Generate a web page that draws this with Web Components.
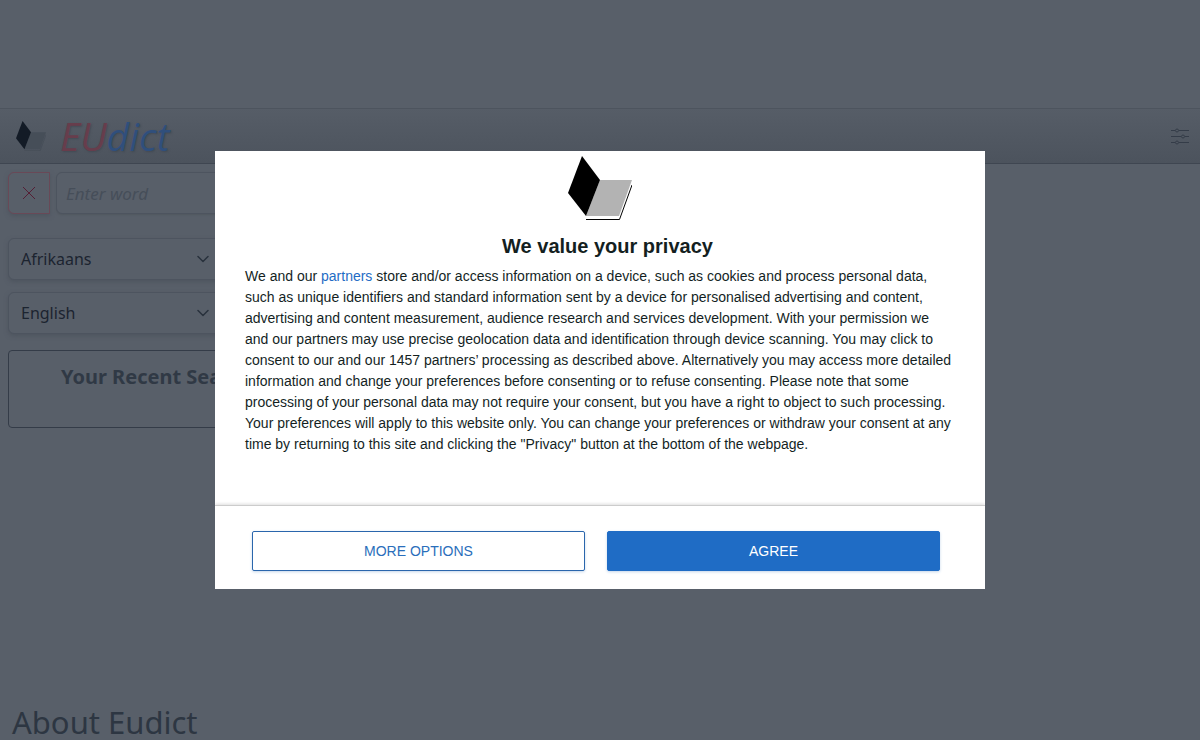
<!DOCTYPE html>
<html lang="en">
<head>
<meta charset="utf-8">
<meta name="viewport" content="width=device-width, initial-scale=1">
<title>EUdict</title>
<style>
  body { margin: 0; background: #585f69; color: #2d3642; font-family: "Noto Sans", "Open Sans", sans-serif; overflow: hidden; }
</style>
</head>
<body>
<eu-page></eu-page>
<privacy-dialog></privacy-dialog>

<template id="logo-tpl">
  <style>
    :host { display: block; }
    svg { display: block; width: 100%; height: 100%; }
    .cover { fill: var(--cover, #000); }
    .leaf { fill: var(--leaf, #b3b3b3); }
    .edge { fill: none; stroke: var(--edge, #000); stroke-width: 1; }
  </style>
  <svg viewBox="0 0 64 64" aria-hidden="true">
    <path class="leaf" d="M32 24H64L51 60H18Z"/>
    <path class="cover" d="M14 0L32 24L18 60L0 37Z"/>
    <path class="edge" d="M64 29L51.500 63.500H18"/>
  </svg>
</template>

<template id="header-tpl">
  <style>
    :host { display: flex; align-items: center; box-sizing: border-box; height: 56px; padding: 0 11px 0 16px;
      border-top: 1px solid #4d545e; border-bottom: 1px solid #3f4651;
      background: linear-gradient(#565d67, #4c535d); }
    a { display: flex; align-items: center; gap: 14px; text-decoration: none; }
    eu-logo { width: 30px; height: 30px; --cover: #131b26; --leaf: #464e58; --edge: #3f4751; }
    .name { font: italic 39px/54px "Open Sans", sans-serif; text-shadow: 1px 1px 2px #434a54; }
    .eu { color: #673d4c; }
    .dict { color: #304f7c; }
    button { margin-left: auto; padding: 0; border: 0; background: none; color: #343c48; }
    svg { display: block; width: 18px; height: 18px; }
  </style>
  <a href="#" aria-label="EUdict home"><eu-logo></eu-logo><span class="name"><span class="eu">EU</span><span class="dict">dict</span></span></a>
  <button aria-label="Settings">
    <svg viewBox="0 0 18 18" fill="none" stroke="currentColor" aria-hidden="true">
      <path d="M0 3.500H4M8 3.500H18M0 9.500H10M14 9.500H18M0 15.500H4M8 15.500H18"/>
      <circle cx="6" cy="3.500" r="1.500"/><circle cx="12" cy="9.500" r="1.500"/><circle cx="6" cy="15.500" r="1.500"/>
    </svg>
  </button>
</template>

<template id="select-tpl">
  <style>
    :host { display: grid; align-items: center; }
    select, svg { grid-area: 1 / 1; }
    select { appearance: none; box-sizing: border-box; width: 100%; height: 42px; padding: 0 36px 0 12px;
      border: 1px solid #4d545f; border-radius: 6px; background: #585f69; color: #1c2430;
      font: 16px/24px "Noto Sans", sans-serif; box-shadow: 0 2px 4px #4e555f; }
    svg { justify-self: end; width: 12px; height: 12px; margin-right: 13px; pointer-events: none; }
  </style>
  <select><option></option></select>
  <svg viewBox="0 0 12 12" fill="none" stroke="#29323d" stroke-width="1.500" stroke-linecap="round" stroke-linejoin="round" aria-hidden="true"><path d="M1 3.500L6 8.500L11 3.500"/></svg>
</template>

<template id="search-tpl">
  <style>
    :host { display: block; width: 320px; padding: 8px; }
    .word { display: flex; gap: 6px; margin-bottom: 24px; }
    button { display: grid; place-items: center; box-sizing: border-box; width: 42px; height: 42px; padding: 0;
      border: 1px solid #694957; border-radius: 6px 0 0 6px; background: #585f69; box-shadow: 0 2px 4px #4e555f; }
    svg { width: 14px; height: 14px; }
    input { flex: 1; min-width: 0; box-sizing: border-box; height: 42px; padding: 0 9px; border: 1px solid #4d545f;
      border-radius: 6px; background: #585f69; color: #1c2430; font: 17px/24px "Noto Sans", sans-serif; box-shadow: 0 1px 2px #50575f; }
    input::placeholder { color: #464e59; font-style: italic; opacity: 1; }
    .languages { display: grid; gap: 12px; width: 214px; margin-bottom: 16px; }
    section { box-sizing: border-box; height: 78px; padding: 12px; border: 1px solid #343c48; border-radius: 4px; }
    h2 { margin: 0; font: bold 20px/28px "Noto Sans", sans-serif; color: #303945; text-align: center; }
  </style>
  <div class="word">
    <button aria-label="Clear"><svg viewBox="0 0 14 14" stroke="#551f35" fill="none" aria-hidden="true"><path d="M1 1L13 13M13 1L1 13"/></svg></button>
    <input type="text" placeholder="Enter word" aria-label="Enter word">
  </div>
  <div class="languages">
    <eu-select label="From language" value="Afrikaans"></eu-select>
    <eu-select label="To language" value="English"></eu-select>
  </div>
  <section><h2>Your Recent Searches</h2></section>
</template>

<template id="page-tpl">
  <style>
    :host { display: block; padding-top: 108px; }
    h1 { margin: 268px 12px 0; font: 31px/36px "Noto Sans", sans-serif; color: #2d3642; }
  </style>
  <eu-header></eu-header>
  <main><eu-search></eu-search><h1>About Eudict</h1></main>
</template>

<template id="button-tpl">
  <style>
    :host { display: block; }
    button { display: block; box-sizing: border-box; width: 100%; height: 40px; border: 1px solid #2a66ac; border-radius: 2px;
      background: #fff; color: #2a6ebb; font: 14px/20px "Liberation Sans", Arial, sans-serif; text-transform: uppercase;
      box-shadow: 0 1px 3px #c5d6ea; cursor: pointer; }
    :host([primary]) button { border-color: #1f6cc5; background: #1f6cc5; color: #fff; }
  </style>
  <button><slot></slot></button>
</template>

<template id="dialog-tpl">
  <style>
    :host { position: fixed; inset: 0; display: grid; place-items: center; font-family: "Liberation Sans", Arial, sans-serif; color: #141f1f; }
    .panel { display: flex; flex-direction: column; width: min(770px, 100%); max-height: 100%; overflow: hidden; background: #fff; }
    .body { padding: 5px 30px 50px; }
    eu-logo { width: 64px; height: 64px; margin: 0 auto 12px; }
    h2 { margin: 0 0 6px; padding-left: 15px; font-size: 20px; line-height: 28px; text-align: center; }
    p { margin: 0; font-size: 14px; line-height: 21px; }
    a { color: #1f6cc5; text-decoration: none; }
    footer { display: grid; grid-template-columns: 1fr 1fr; gap: 22px; padding: 25px 45px 18px 37px;
      border-top: 1px solid #ccc; box-shadow: 0 -1px 3px #ddd; }
  </style>
  <div class="panel" role="dialog" aria-modal="true" aria-labelledby="title">
    <div class="body">
      <eu-logo></eu-logo>
      <h2 id="title">We value your privacy</h2>
      <p>We and our <a href="#">partners</a> store and/or access information on a device, such as cookies and process personal data, such as unique identifiers and standard information sent by a device for personalised advertising and content, advertising and content measurement, audience research and services development. With your permission we and our partners may use precise geolocation data and identification through device scanning. You may click to consent to our and our 1457 partners’ processing as described above. Alternatively you may access more detailed information and change your preferences before consenting or to refuse consenting. Please note that some processing of your personal data may not require your consent, but you have a right to object to such processing. Your preferences will apply to this website only. You can change your preferences or withdraw your consent at any time by returning to this site and clicking the "Privacy" button at the bottom of the webpage.</p>
    </div>
    <footer><eu-button>More options</eu-button><eu-button primary>Agree</eu-button></footer>
  </div>
</template>

<script>
  class TemplateElement extends HTMLElement {
    constructor() {
      super();
      const tpl = document.getElementById(this.constructor.template);
      this.attachShadow({ mode: "open" }).append(tpl.content.cloneNode(true));
    }
  }
  customElements.define("eu-logo", class extends TemplateElement { static template = "logo-tpl"; });
  customElements.define("eu-header", class extends TemplateElement { static template = "header-tpl"; });
  customElements.define("eu-select", class extends TemplateElement {
    static template = "select-tpl";
    connectedCallback() {
      this.shadowRoot.querySelector("select").setAttribute("aria-label", this.getAttribute("label"));
      this.shadowRoot.querySelector("option").textContent = this.getAttribute("value");
    }
  });
  customElements.define("eu-search", class extends TemplateElement { static template = "search-tpl"; });
  customElements.define("eu-button", class extends TemplateElement { static template = "button-tpl"; });
  customElements.define("eu-page", class extends TemplateElement { static template = "page-tpl"; });
  customElements.define("privacy-dialog", class extends TemplateElement { static template = "dialog-tpl"; });
</script>
</body>
</html>
